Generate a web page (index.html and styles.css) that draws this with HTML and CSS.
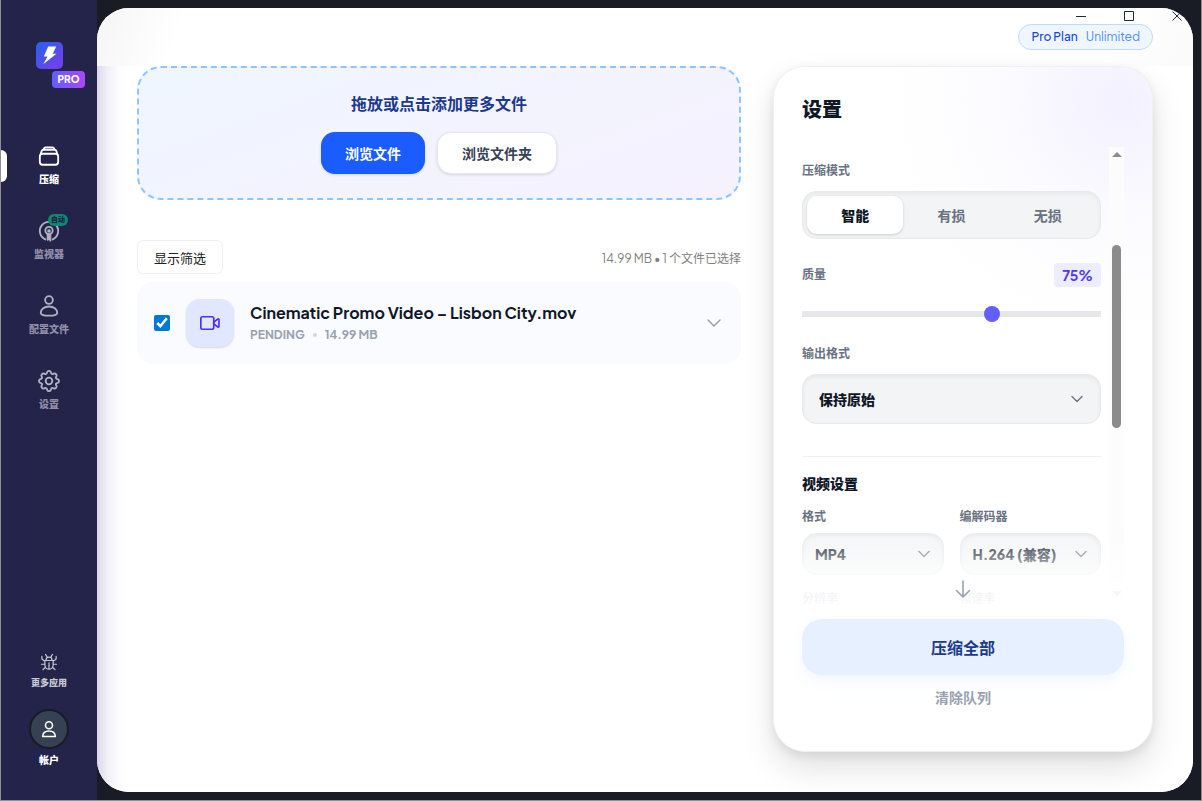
FILE: index.html
```html
<!DOCTYPE html>
<html lang="zh-CN">
<head>
    <meta charset="UTF-8">
    <meta name="viewport" content="width=device-width, initial-scale=1.0">
    <title>压缩</title>
    <link rel="stylesheet" href="styles.css">
</head>
<body>
    <div class="window-controls">
        <button type="button" aria-label="最小化"><svg width="10" height="10" viewBox="0 0 10 10"><path d="M0 5.5h10"/></svg></button>
        <button type="button" aria-label="最大化"><svg width="10" height="10" viewBox="0 0 10 10"><path d="M.5.5h9v9h-9z"/></svg></button>
        <button type="button" aria-label="关闭"><svg width="10" height="10" viewBox="0 0 10 10"><path d="M.5.5l9 9M9.5.5l-9 9"/></svg></button>
    </div>

    <aside class="sidebar">
        <div class="brand">
            <svg class="logo" width="27" height="27" viewBox="0 0 27 27">
                <defs>
                    <linearGradient id="logo-fill" x1="0" y1="0" x2="1" y2="1">
                        <stop offset="0" stop-color="#2563eb"/>
                        <stop offset="1" stop-color="#7c3aed"/>
                    </linearGradient>
                </defs>
                <rect width="27" height="27" rx="5" fill="url(#logo-fill)"/>
                <path d="M12.2 4.500h8l-3.400 7.300h3.700L7.200 22.200l4.300-7.700H7.800z" fill="#fff"/>
            </svg>
            <span class="pro-badge">PRO</span>
        </div>

        <nav class="nav">
            <a href="#" class="nav-item active">
                <svg class="icon" width="22" height="22" viewBox="0 0 24 24"><rect x="2" y="9.500" width="20" height="12" rx="3"/><path d="M3 9.500l1-3a2 2 0 0 1 1.900-1.300h12.200A2 2 0 0 1 20 6.500l1 3M6 5l.6-1.500A1.500 1.500 0 0 1 8 2.500h8a1.500 1.500 0 0 1 1.400 1L18 5"/></svg>
                <span>压缩</span>
            </a>
            <a href="#" class="nav-item">
                <svg class="icon" width="22" height="22" viewBox="0 0 24 24"><path d="M8 21.200a10 10 0 1 1 8 0"/><circle cx="12" cy="11.500" r="4"/><circle cx="12" cy="12" r="1"/><path d="M10.500 15v6.500M13.500 15v7.500M12 17v4"/></svg>
                <span class="auto-badge">自动</span>
                <span>监视器</span>
            </a>
            <a href="#" class="nav-item">
                <svg class="icon" width="22" height="22" viewBox="0 0 24 24"><circle cx="12" cy="5.500" r="4.200"/><path d="M3 19.500c0-4.200 4-7 9-7s9 2.800 9 7c0 2-4 3-9 3s-9-1-9-3z"/></svg>
                <span>配置文件</span>
            </a>
            <a href="#" class="nav-item">
                <svg class="icon" width="22" height="22" viewBox="0 0 24 24"><circle cx="12" cy="12" r="3.600"/><path d="M9.900 2.500a2.200 2.200 0 0 1 4.200 0l.3.900a1.500 1.500 0 0 0 2.200.9l.6-.3a2.200 2.200 0 0 1 2.900 2.900l-.4.700a1.500 1.500 0 0 0 .9 2.200l.9.200a2.200 2.200 0 0 1 0 4.100l-.9.200a1.500 1.500 0 0 0-.9 2.200l.4.600a2.200 2.200 0 0 1-2.900 2.900l-.7-.3a1.500 1.500 0 0 0-2.200.9l-.2.900a2.200 2.200 0 0 1-4.200 0l-.3-.9a1.500 1.500 0 0 0-2.200-.9l-.6.300a2.200 2.200 0 0 1-2.900-2.900l.3-.6a1.500 1.500 0 0 0-.9-2.200l-.8-.2a2.200 2.200 0 0 1 0-4.100l.8-.2a1.500 1.500 0 0 0 .9-2.200l-.3-.7A2.200 2.200 0 0 1 6.800 4l.6.300a1.500 1.500 0 0 0 2.200-.9z"/></svg>
                <span>设置</span>
            </a>
        </nav>

        <div class="sidebar-footer">
            <a href="#" class="more-apps">
                <svg class="icon" width="18" height="18" viewBox="0 0 24 24"><path d="M6.500 10h11v5.500a5.500 6 0 0 1-11 0zM12 13v8M8 9.500a4 4 0 0 1 8 0M9.500 5.500L7.500 2M14.500 5.500l2-3.500M6.500 11L2.500 8V4.500M17.500 11l4-3V4.500M6.500 15H2M17.500 15H22M7.500 19L4 22M16.500 19l3.500 3"/></svg>
                <span>更多应用</span>
            </a>
            <button type="button" class="account">
                <span class="avatar">
                    <svg class="icon" width="18" height="18" viewBox="0 0 24 24"><circle cx="12" cy="7" r="4.700"/><path d="M3.500 22c.3-4.600 3.700-7.300 8.500-7.300s8.200 2.700 8.500 7.300z"/></svg>
                </span>
                <span>帐户</span>
            </button>
        </div>
    </aside>

    <main class="main">
        <header class="topbar">
            <a href="#" class="plan"><span>Pro Plan</span><span class="plan-limit">Unlimited</span></a>
        </header>

        <div class="content">
            <section class="files">
                <div class="dropzone">
                    <h2>拖放或点击添加更多文件</h2>
                    <div class="dropzone-actions">
                        <button type="button" class="btn btn-primary">浏览文件</button>
                        <button type="button" class="btn btn-outline">浏览文件夹</button>
                    </div>
                </div>

                <div class="list-bar">
                    <button type="button" class="filter-btn">显示筛选</button>
                    <span class="summary">14.99 MB • 1 个文件已选择</span>
                </div>

                <div class="file-card">
                    <input type="checkbox" checked aria-label="选择 Cinematic Promo Video – Lisbon City.mov">
                    <div class="file-icon">
                        <svg width="20" height="20" viewBox="0 0 24 24"><rect x="1" y="4.500" width="15.500" height="15" rx="2"/><path d="M16.500 11l5-3.800a.8.8 0 0 1 1.300.6v8.400a.8.8 0 0 1-1.300.6l-5-3.800z"/></svg>
                    </div>
                    <div class="file-info">
                        <div class="file-name">Cinematic Promo Video – Lisbon City.mov</div>
                        <div class="file-meta"><span>PENDING</span><i class="dot"></i><span>14.99 MB</span></div>
                    </div>
                    <button type="button" class="expand" aria-label="展开">
                        <svg width="16" height="16" viewBox="0 0 16 16"><path d="M2 5l6 6 6-6"/></svg>
                    </button>
                </div>
            </section>

            <section class="panel">
                <h1>设置</h1>

                <div class="panel-body">
                    <div class="options">
                        <div class="label">压缩模式</div>
                        <div class="modes">
                            <button type="button" class="mode selected">智能</button>
                            <button type="button" class="mode">有损</button>
                            <button type="button" class="mode">无损</button>
                        </div>

                        <div class="quality-head">
                            <label class="label" for="quality">质量</label>
                            <output class="quality-value" for="quality">75%</output>
                        </div>
                        <input type="range" class="slider" id="quality" min="30" max="100" value="75">

                        <label class="label" for="output-format">输出格式</label>
                        <div class="select-wrap">
                            <select id="output-format"><option>保持原始</option></select>
                            <svg width="12" height="12" viewBox="0 0 12 12"><path d="M1 3.500l5 5 5-5"/></svg>
                        </div>

                        <div class="video-settings">
                            <h3>视频设置</h3>
                            <div class="fields">
                                <div class="field">
                                    <label class="label" for="format">格式</label>
                                    <div class="select-wrap small">
                                        <select id="format"><option>MP4</option></select>
                                        <svg width="12" height="12" viewBox="0 0 12 12"><path d="M1 3.500l5 5 5-5"/></svg>
                                    </div>
                                </div>
                                <div class="field">
                                    <label class="label" for="codec">编解码器</label>
                                    <div class="select-wrap small">
                                        <select id="codec"><option>H.264 (兼容)</option></select>
                                        <svg width="12" height="12" viewBox="0 0 12 12"><path d="M1 3.500l5 5 5-5"/></svg>
                                    </div>
                                </div>
                                <div class="label">分辨率</div>
                                <div class="label">帧速率</div>
                            </div>
                        </div>
                    </div>

                    <div class="scrollbar">
                        <i class="arrow-up"></i>
                        <i class="thumb"></i>
                        <i class="arrow-down"></i>
                    </div>

                    <div class="fade">
                        <svg width="16" height="18" viewBox="0 0 16 18"><path d="M8 1v16M1.500 10.500L8 17l6.500-6.500"/></svg>
                    </div>
                </div>

                <button type="button" class="compress-btn">压缩全部</button>
                <button type="button" class="clear-btn">清除队列</button>
            </section>
        </div>
    </main>
</body>
</html>
```
FILE: styles.css
```css
* {
    box-sizing: border-box;
}

body {
    margin: 0;
    height: 100vh;
    display: flex;
    position: relative;
    overflow: hidden;
    background: #1a1c25;
    border: 1px solid #8f9096;
    border-top: none;
    font-family: 'Plus Jakarta Sans', Inter, 'Noto Sans CJK SC', sans-serif;
    color: #101828;
}

button,
select {
    font-family: inherit;
    cursor: pointer;
}

button {
    border: none;
    background: none;
    padding: 0;
}

a {
    color: inherit;
    text-decoration: none;
}

h1, h2, h3 {
    margin: 0;
}

svg {
    display: block;
    fill: none;
    stroke-linecap: round;
    stroke-linejoin: round;
}

/* Window buttons, over the top bar */
.window-controls {
    position: absolute;
    top: 0;
    right: 0;
    z-index: 5;
    display: flex;
}

.window-controls button {
    width: 48px;
    height: 32px;
    display: grid;
    place-items: center;
}

.window-controls svg {
    stroke: #1e293b;
    stroke-linecap: butt;
}

/* Sidebar */
.sidebar {
    width: 96px;
    flex-shrink: 0;
    display: flex;
    flex-direction: column;
    align-items: center;
    padding: 42px 0 32px;
    background: #24234a;
    color: #fff;
}

.brand {
    position: relative;
}

.pro-badge {
    position: absolute;
    left: 16px;
    top: 29px;
    padding: 0 6px;
    border-radius: 4px;
    background: linear-gradient(90deg, #615fff, #ad46ff);
    font-size: 10px;
    font-weight: 800;
    line-height: 17px;
}

.nav {
    width: 100%;
    margin-top: 76px;
    display: flex;
    flex-direction: column;
    gap: 33px;
}

.nav-item {
    position: relative;
    display: flex;
    flex-direction: column;
    align-items: center;
    gap: 4px;
    font-size: 10px;
    font-weight: 800;
    line-height: 16px;
    color: #918fa8;
}

.nav-item.active {
    color: #fff;
}

.nav-item.active::before {
    content: '';
    position: absolute;
    left: 0;
    top: 5px;
    width: 6px;
    height: 32px;
    border-radius: 0 6px 6px 0;
    background: #fff;
}

.icon {
    stroke: currentColor;
    stroke-width: 2;
}

.nav-item .icon {
    color: #b1b0c5;
}

.nav-item.active .icon {
    color: #fff;
}

.auto-badge {
    position: absolute;
    top: -6px;
    left: 47px;
    padding: 0 3px;
    border-radius: 6px;
    background: #0d8a6d;
    color: #1d2348;
    font-size: 7px;
    line-height: 12px;
}

.sidebar-footer {
    margin-top: auto;
    display: flex;
    flex-direction: column;
    align-items: center;
    gap: 18px;
}

.more-apps {
    display: flex;
    flex-direction: column;
    align-items: center;
    gap: 4px;
    font-size: 9px;
    font-weight: 800;
    line-height: 16px;
    color: #c8c8d4;
}

.more-apps .icon {
    stroke-width: 1.6;
}

.account {
    display: flex;
    flex-direction: column;
    align-items: center;
    gap: 3px;
    color: #fff;
    font-size: 10px;
    font-weight: 800;
    line-height: 16px;
}

.avatar {
    width: 40px;
    height: 40px;
    display: grid;
    place-items: center;
    border: 2px solid #1a1c25;
    border-radius: 50%;
    background: #364153;
}

/* Main area */
.main {
    flex: 1;
    min-width: 0;
    display: flex;
    flex-direction: column;
    margin: 8px 8px 8px 0;
    border-radius: 32px;
    overflow: hidden;
    background: #fff;
}

.topbar {
    height: 58px;
    flex-shrink: 0;
    padding: 16px 40px 0;
    display: flex;
    justify-content: flex-end;
    align-items: flex-start;
    background: linear-gradient(110deg, #f5f5f5, #fff 8%, #fff 92%, #fafafa);
}

.plan {
    display: flex;
    gap: 8px;
    padding: 0 12px;
    border: 1px solid #bedbff;
    border-radius: 13px;
    background: #eff6ff;
    color: #1447e6;
    font-size: 12px;
    font-weight: 500;
    line-height: 24px;
}

.plan-limit {
    color: #4b8dff;
    font-weight: 400;
}

.content {
    flex: 1;
    min-height: 0;
    display: flex;
    gap: 32px;
    padding: 0 40px 40px;
    background: linear-gradient(90deg, #d9d8e8, #f0eff6 10px, #fcfcfd 22px, #fff 32px);
}

.files {
    flex: 1;
    min-width: 0;
}

.dropzone {
    padding: 24px;
    text-align: center;
    border: 2px dashed #8ec5ff;
    border-radius: 24px;
    background: linear-gradient(160deg, #eff6ff, #f3f3fe 55%, #f5f2fe);
}

.dropzone h2 {
    font-size: 16px;
    font-weight: 600;
    line-height: 24px;
    color: #1c398e;
}

.dropzone-actions {
    display: flex;
    justify-content: center;
    gap: 12px;
    margin-top: 16px;
}

.btn {
    height: 42px;
    padding: 0 24px;
    border-radius: 14px;
    font-size: 14px;
    font-weight: 700;
    box-shadow: 0 1px 3px rgba(0, 0, 0, 0.12);
}

.btn-primary {
    background: #1a5cff;
    color: #fff;
}

.btn-outline {
    border: 1px solid #e5e7eb;
    background: #fff;
    color: #364153;
}

.list-bar {
    display: flex;
    justify-content: space-between;
    align-items: center;
    margin: 40px 0 8px;
}

.filter-btn {
    height: 34px;
    padding: 0 16px;
    border: 1px solid #f0f0f2;
    border-radius: 6px;
    background: #fff;
    color: #222;
    font-size: 13px;
}

.summary {
    font-size: 12px;
    color: #808080;
}

.file-card {
    display: flex;
    align-items: center;
    gap: 16px;
    padding: 17px;
    border-radius: 16px;
    background: #fafbfe;
}

.file-card input {
    width: 16px;
    height: 16px;
    margin: 0;
    accent-color: #0078d7;
}

.file-icon {
    width: 48px;
    height: 48px;
    display: grid;
    place-items: center;
    border-radius: 14px;
    background: #e0e7ff;
    box-shadow: 0 1px 2px rgba(0, 0, 0, 0.14);
}

.file-icon svg {
    stroke: #4f2ff5;
    stroke-width: 2;
}

.file-info {
    flex: 1;
    min-width: 0;
}

.file-name {
    font-size: 16px;
    font-weight: 700;
    line-height: 24px;
}

.file-meta {
    display: flex;
    align-items: center;
    gap: 8px;
    font-size: 12px;
    font-weight: 700;
    line-height: 20px;
    color: #99a1af;
}

.dot {
    width: 4px;
    height: 4px;
    border-radius: 50%;
    background: #d1d5dc;
}

.expand {
    padding: 2px;
}

.expand svg {
    stroke: #99a1af;
    stroke-width: 1.5;
}

/* Settings panel */
.panel {
    width: 380px;
    flex-shrink: 0;
    display: flex;
    flex-direction: column;
    padding: 28px;
    border: 1px solid #f0f0f3;
    border-radius: 32px;
    background: radial-gradient(circle at 92% 5%, #f3f1ff, rgba(250, 249, 255, 0.7) 120px, transparent 230px), #fff;
    box-shadow: 0 16px 32px rgba(0, 0, 0, 0.12), 0 4px 10px rgba(0, 0, 0, 0.08);
}

.panel h1 {
    font-size: 20px;
    font-weight: 800;
    line-height: 28px;
}

.panel-body {
    position: relative;
    flex: 1;
    min-height: 0;
    display: flex;
    gap: 8px;
    margin: 24px 0 8px;
}

.options {
    flex: 1;
    min-width: 0;
    padding-top: 16px;
    overflow: hidden;
}

.label {
    display: block;
    font-size: 12px;
    font-weight: 700;
    line-height: 16px;
    color: #6a7282;
}

.modes {
    display: flex;
    margin: 12px 0 24px;
    padding: 4px;
    border: 1px solid #e8e9ec;
    border-radius: 14px;
    background: #f3f4f6;
    box-shadow: inset 0 2px 4px rgba(0, 0, 0, 0.05);
}

.mode {
    flex: 1;
    height: 38px;
    border-radius: 10px;
    color: #6a7282;
    font-size: 14px;
    font-weight: 700;
}

.mode.selected {
    background: #fff;
    color: #101828;
    font-weight: 800;
    box-shadow: 0 1px 3px rgba(0, 0, 0, 0.16);
}

.quality-head {
    display: flex;
    justify-content: space-between;
    align-items: center;
}

.quality-value {
    padding: 0 8px;
    border-radius: 4px;
    background: #eeecff;
    color: #4f39f6;
    font-size: 14px;
    font-weight: 700;
    line-height: 24px;
}

.slider {
    display: block;
    appearance: none;
    width: 100%;
    height: 16px;
    margin: 19px 0 24px;
    background: linear-gradient(#e5e7eb, #e5e7eb) center / 100% 6px no-repeat;
    border-radius: 3px;
}

.slider::-webkit-slider-thumb {
    appearance: none;
    width: 16px;
    height: 16px;
    border-radius: 50%;
    background: #615fff;
}

.select-wrap {
    position: relative;
    margin-top: 12px;
}

.select-wrap select {
    appearance: none;
    display: block;
    width: 100%;
    height: 50px;
    padding: 0 16px;
    border: 1px solid #e8e9ec;
    border-radius: 14px;
    background: #f3f4f6;
    box-shadow: inset 0 2px 4px rgba(0, 0, 0, 0.06);
    color: #101828;
    font-size: 14px;
    font-weight: 800;
}

.select-wrap svg {
    position: absolute;
    top: 50%;
    right: 18px;
    margin-top: -6px;
    stroke: #6a7282;
    stroke-width: 1.4;
    pointer-events: none;
}

.select-wrap.small {
    margin-top: 8px;
}

.select-wrap.small select {
    height: 42px;
    padding: 0 12px;
}

.select-wrap.small svg {
    right: 14px;
}

.video-settings {
    margin-top: 32px;
    padding-top: 16px;
    border-top: 1px solid #f0f1f3;
}

.video-settings h3 {
    font-size: 14px;
    font-weight: 800;
    line-height: 20px;
}

.fields {
    display: grid;
    grid-template-columns: 1fr 1fr;
    gap: 16px;
    margin-top: 16px;
}

.scrollbar {
    position: relative;
    width: 15px;
    display: flex;
    flex-direction: column;
    justify-content: space-between;
    align-items: center;
    margin-bottom: 10px;
    padding: 5px 0;
    background: #fcfcfc;
}

.arrow-up,
.arrow-down {
    border: 5px solid transparent;
}

.arrow-up {
    border-top: none;
    border-bottom-color: #8b8b8b;
}

.arrow-down {
    border-bottom: none;
    border-top-color: #8b8b8b;
}

.thumb {
    position: absolute;
    top: 21.5%;
    width: 9px;
    height: 40.5%;
    border-radius: 5px;
    background: #8b8b8b;
}

.fade {
    position: absolute;
    left: 0;
    right: 0;
    bottom: 0;
    height: 92px;
    display: flex;
    justify-content: center;
    align-items: flex-end;
    padding-bottom: 13px;
    background: linear-gradient(rgba(255, 255, 255, 0), rgba(255, 255, 255, 0.3) 28px, rgba(255, 255, 255, 0.9) 64px, rgba(255, 255, 255, 0.97));
    pointer-events: none;
}

.fade svg {
    stroke: #99a1af;
    stroke-width: 1.6;
}

.compress-btn {
    height: 56px;
    flex-shrink: 0;
    border-radius: 20px;
    background: #e6f0ff;
    box-shadow: 0 6px 14px rgba(219, 234, 254, 0.4);
    color: #1c398e;
    font-size: 16px;
    font-weight: 700;
}

.clear-btn {
    height: 48px;
    flex-shrink: 0;
    padding-bottom: 4px;
    color: #99a1af;
    font-size: 14px;
    font-weight: 700;
}
```
